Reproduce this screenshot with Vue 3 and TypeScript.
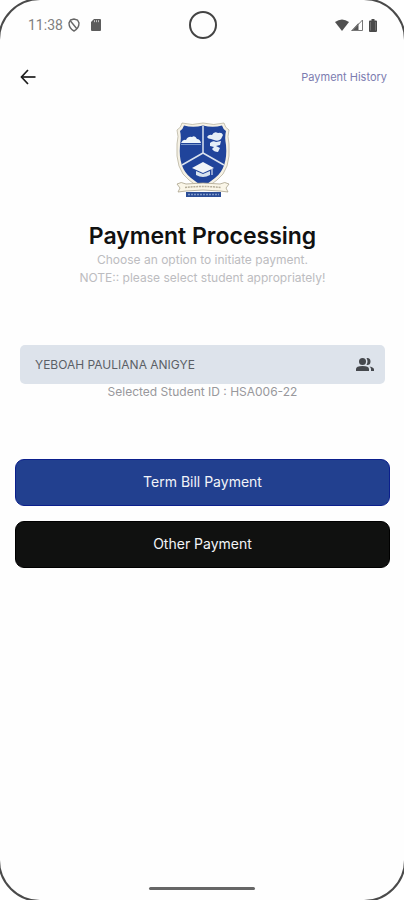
<script setup lang="ts">
import { ref } from 'vue'

const student = ref('YEBOAH PAULIANA ANIGYE')
const studentId = 'HSA006-22'
const payments = [
  { label: 'Term Bill Payment', kind: 'primary' },
  { label: 'Other Payment', kind: 'dark' },
]
</script>

<template>
  <div class="screen">
    <div class="frame" aria-hidden="true"></div>
    <header class="status">
      <div class="status-left">
        <span class="time">11:38</span>
        <svg class="shield" viewBox="0 0 12 14" width="12" height="14" fill="none" stroke="#666" stroke-width="1.4">
          <path d="M2.500 2 6 1l3.500 1L11 5c0 4-2 6.500-5 8C3 11.500 1 9 1 5z" />
          <path d="M2.500 3l6.500 8" />
        </svg>
        <svg viewBox="0 0 10 12" width="10" height="12">
          <path d="M3 0h6q1 0 1 1v10q0 1-1 1H1q-1 0-1-1V3z" fill="#5c5c5c" />
          <path d="M3.500 1.200v2M5.500 1.200v2M7.500 1.200v2" stroke="#ddd" stroke-width=".8" />
        </svg>
      </div>
      <span class="camera"></span>
      <div class="status-right">
        <svg viewBox="0 0 14 12" width="14" height="12">
          <path d="M0 3Q7-2 14 3L7 12z" fill="#505050" />
        </svg>
        <svg viewBox="0 0 12 12" width="12" height="12">
          <path d="M0 12 7.500 4v8z" fill="#555" />
          <path d="M1.500 11.500 11.500 1v10.500z" fill="none" stroke="#777" />
        </svg>
        <svg class="battery" viewBox="0 0 8 13" width="8" height="13">
          <path d="M2.500 0h3v1.500H7q1 0 1 1V12q0 1-1 1H1q-1 0-1-1V2.500q0-1 1-1h1.500z" fill="#4a4a4a" />
          <path d="M1.500 3v8.500M6.500 3v8.500" stroke="#888" stroke-width=".6" />
        </svg>
      </div>
    </header>

    <nav class="nav">
      <button class="back" type="button" aria-label="Back">
        <svg viewBox="0 0 16 16" width="16" height="16" fill="none" stroke="#1c1c1c" stroke-width="1.700">
          <path d="M8 1 1.500 8 8 15" />
          <path d="M1.500 8H15.500" />
        </svg>
      </button>
      <a class="history" href="#history">Payment History</a>
    </nav>

    <main class="content">
      <svg class="crest" viewBox="0 0 56 76" width="56" height="76">
        <path d="M7 1Q17 4 28 1 39 4 49 1 50 6 54 8 52 14 54 22 56 48 42 58 35 64 28 67 21 64 14 58 0 48 2 22 4 14 2 8 6 6 7 1z" fill="#f5f1e5" stroke="#b9b49f" stroke-width=".8" />
        <path d="M9 3.500Q18 6 28 3.500 38 6 47 3.500 48 7 51 9 49.500 15 51 23 53 46 40 56 34 61 28 64 22 61 16 56 3 46 5 23 6.500 15 5 9 8 7 9 3.500z" fill="#20449b" />
        <path d="M28 4v27M28 31 7 43M28 31l21 12" stroke="#d9e2ef" stroke-width="1.500" />
        <path d="M6 21q2-4 5-3 2-4 6-3 3-2 5 2 3 0 4 4z" fill="#eef5fa" />
        <path d="M6 22.500h20" stroke="#8fabd6" stroke-width=".8" />
        <path d="M32 15q2-3 5-2 2-4 6-2 4-1 5 2l-2 4q-3 3-7 1l-3-1q-3 0-4-2zM35 21q3-3 6-1l5-1-1 4-4 1 4 2-2 4q-4 0-6-3l2-2-4-1z" fill="#e6eff7" />
        <path d="M17 46l11-6 11 6-11 5z" fill="#f1f5f8" />
        <path d="M21 49v4q7 4 14 0v-4l-7 3z" fill="#d8e3ee" />
        <path d="M37 47v6" fill="none" stroke="#fff" />
        <path d="M2 62q4-3 9 0 17-2 34 0 5-3 9 0l-3 4 2 4-8-1q-17-2-34 0l-8 1 2-4z" fill="#faf6e8" stroke="#aaa28c" stroke-width=".8" />
        <path d="M10 65.500q18-2 36 0" fill="none" stroke="#b5ad98" stroke-width="1.500" stroke-dasharray="2 .8" />
        <rect x="11" y="70" width="35" height="5" fill="#2b4d96" />
        <path d="M13 72.500h31" stroke="#7f98c8" stroke-width="1.300" stroke-dasharray="2 1" />
      </svg>
      <h1>Payment Processing</h1>
      <p class="intro">Choose an option to initiate payment.<br />NOTE:: please select student appropriately!</p>

      <div class="field">
        <input v-model="student" type="text" aria-label="Student" readonly />
        <svg viewBox="0 0 20 16" width="20" height="16" fill="#45484d">
          <circle cx="7.500" cy="4.500" r="3.500" />
          <path d="M1 14v-2q0-3 6.500-3T14 12v2z" />
          <path d="M11.500 1q4-.5 4 3.500t-4 3.500q2-3.500 0-7zM14.500 9.500q4.500.8 4.500 3V14h-3v-2q0-1.500-1.500-2.500z" />
        </svg>
      </div>
      <p class="selected">Selected Student ID : {{ studentId }}</p>

      <div class="actions">
        <button v-for="p in payments" :key="p.label" type="button" class="pay" :class="p.kind">{{ p.label }}</button>
      </div>
    </main>
    <div class="home"></div>
  </div>
</template>

<style>
body {
  background: #fff;
}
</style>

<style scoped>
.screen {
  position: relative;
  display: flex;
  flex-direction: column;
  min-height: 100vh;
  overflow: hidden;
  background: #fefefe;
  font-family: Inter, "Open Sans", sans-serif;
}
.frame {
  position: absolute;
  inset: -2px;
  border: 2px solid #4a4a4a;
  border-radius: 42px;
  box-shadow: 0 0 0 40px #fff;
  pointer-events: none;
}
.status {
  display: grid;
  grid-template-columns: 1fr auto 1fr;
  align-items: center;
  height: 50px;
  padding: 0 27px 0 28px;
}
.status-left,
.status-right {
  display: flex;
  align-items: center;
  gap: 5px;
}
.status-left svg + svg {
  margin-left: 6px;
}
.status-right {
  justify-content: flex-end;
  gap: 2px;
}
.battery {
  margin-left: 4px;
}
.time {
  font: 14px/18px Roboto, sans-serif;
  color: #808080;
}
.camera {
  box-sizing: border-box;
  width: 28px;
  height: 28px;
  border: 2px solid #444;
  border-radius: 50%;
}
.nav {
  display: flex;
  align-items: center;
  justify-content: space-between;
  height: 54px;
  padding: 0 17px 0 20px;
}
button {
  font-family: inherit;
  cursor: pointer;
}
.back {
  display: flex;
  padding: 0;
  border: 0;
  background: none;
}
.history {
  font-size: 11px;
  color: #7c7cb0;
  text-decoration: none;
}
.content {
  display: flex;
  flex-direction: column;
  align-items: center;
  flex: 1;
  padding: 18px 14px 0 15px;
}
h1 {
  margin: 23px 0 0;
  font-size: 23px;
  line-height: 30px;
  font-weight: 600;
  color: #111;
}
.intro {
  margin: 0;
  font-size: 12px;
  line-height: 18px;
  color: #bcbcc0;
  text-align: center;
}
.field {
  box-sizing: border-box;
  display: flex;
  align-items: center;
  align-self: stretch;
  height: 39px;
  margin: 58px 5px 0;
  padding: 0 10px 0 15px;
  border-radius: 5px;
  background: #dde3eb;
}
input {
  flex: 1;
  min-width: 0;
  padding: 0;
  border: 0;
  outline: 0;
  background: none;
  font-family: inherit;
  font-size: 12px;
  color: #5b5f66;
}
.selected {
  margin: 0;
  font-size: 12px;
  line-height: 16px;
  color: #98989c;
}
.actions {
  display: flex;
  flex-direction: column;
  align-self: stretch;
  gap: 15px;
  margin-top: 59px;
}
.pay {
  height: 47px;
  padding: 0 16px 2px;
  border: 1px solid;
  border-radius: 9px;
  font-size: 14px;
  color: #f2f4f8;
}
.primary {
  border-color: #0b1f8c;
  background: #22408f;
}
.dark {
  border-color: #000;
  background: #101110;
}
.home {
  align-self: center;
  width: 106px;
  height: 3px;
  margin-bottom: 10px;
  border-radius: 2px;
  background: #666;
}
</style>
